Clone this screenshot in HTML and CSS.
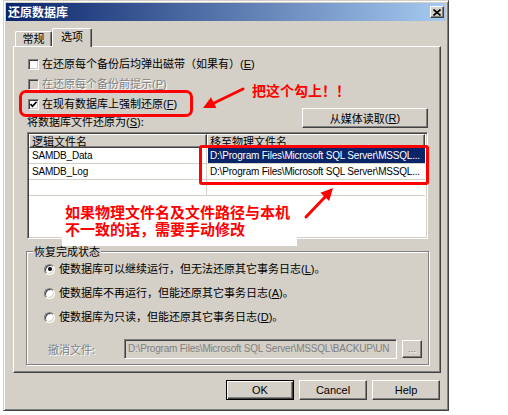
FILE: index.html
```html
<!DOCTYPE html>
<html lang="zh-CN">
<head>
<meta charset="utf-8">
<title>还原数据库</title>
<link rel="stylesheet" href="styles.css">
</head>
<body>
<div class="dialog">
  <div class="titlebar">
    <span class="title">还原数据库</span>
    <span class="close"><svg width="8" height="7" viewBox="0 0 8 7"><path d="M0.5 0.5 L7.5 6.5 M7.5 0.5 L0.5 6.5" stroke="#000" stroke-width="1.6" fill="none"/></svg></span>
  </div>
  <div class="content">
    <div class="tabs">
      <div class="tab">常规</div>
      <div class="tab active">选项</div>
    </div>
    <div class="panel">
      <div class="checks">
        <div class="chk"><span class="box"></span><span>在还原每个备份后均弹出磁带（如果有）<span class="acc">(<u>E</u>)</span></span></div>
        <div class="chk disabled"><span class="box"></span><span>在还原每个备份前提示<span class="acc">(<u>P</u>)</span></span></div>
        <div class="chk"><span class="box"><svg width="7" height="7" viewBox="0 0 7 7"><path d="M0.5 3 L2.5 5.2 L6.5 0.8" stroke="#000" stroke-width="1.6" fill="none"/></svg></span><span>在现有数据库上强制还原<span class="acc">(<u>F</u>)</span></span></div>
      </div>
      <div class="restore-row">
        <span class="restore-label">将数据库文件还原为<span class="acc">(<u>S</u>)</span>:</span>
        <span class="btn wide">从媒体读取<span class="acc">(<u>R</u>)</span></span>
      </div>
      <div class="listview">
        <div class="lv-head">
          <div class="hcell">逻辑文件名</div>
          <div class="hcell">移至物理文件名</div>
        </div>
        <div class="lv-row">
          <div class="cell">SAMDB_Data</div>
          <div class="cell"><span class="sel">D:\Program Files\Microsoft SQL Server\MSSQL...</span></div>
        </div>
        <div class="lv-row">
          <div class="cell">SAMDB_Log</div>
          <div class="cell"><span class="plain">D:\Program Files\Microsoft SQL Server\MSSQL...</span></div>
        </div>
        <div class="lv-row">
          <div class="cell"></div>
          <div class="cell"></div>
        </div>
      </div>
      <div class="group">
        <span class="group-label">恢复完成状态</span>
        <div class="radio-row"><span class="radio on"></span><span>使数据库可以继续运行，但无法还原其它事务日志<span class="acc">(<u>L</u>)</span>。</span></div>
        <div class="radio-row"><span class="radio"></span><span>使数据库不再运行，但能还原其它事务日志<span class="acc">(<u>A</u>)</span>。</span></div>
        <div class="radio-row"><span class="radio"></span><span>使数据库为只读，但能还原其它事务日志<span class="acc">(<u>D</u>)</span>。</span></div>
        <div class="undo-row">
          <span class="undo-label">撤消文件:</span>
          <span class="textbox">D:\Program Files\Microsoft SQL Server\MSSQL\BACKUP\UN</span>
          <span class="btn small">...</span>
        </div>
      </div>
    </div>
    <div class="buttons">
      <span class="btn default">OK</span>
      <span class="btn">Cancel</span>
      <span class="btn">Help</span>
    </div>
  </div>
</div>

<div class="mark mark-check"></div>
<div class="mark mark-files"></div>
<div class="note note-check">把这个勾上！！</div>
<div class="note-box">如果物理文件名及文件路径与本机<br>不一致的话，需要手动修改</div>
<svg class="arrows" width="508" height="415" viewBox="0 0 508 415">
  <line x1="243" y1="89" x2="212" y2="104" stroke="#f00" stroke-width="3" stroke-linecap="round"/>
  <polygon points="203,108 216.4,108 211,97.2" fill="#f00"/>
  <line x1="306" y1="217" x2="325" y2="197" stroke="#f00" stroke-width="3" stroke-linecap="round"/>
  <polygon points="333,188 329.2,200.9 320.4,192.7" fill="#f00"/>
</svg>
</body>
</html>
```

FILE: styles.css
```css
* { box-sizing: border-box; }

body {
  margin: 0;
  width: 508px;
  height: 415px;
  overflow: hidden;
  position: relative;
  background: #fff;
  font-family: "Noto Sans CJK SC", "Liberation Sans", sans-serif;
  font-size: 11px;
  line-height: 13px;
  color: #000;
}

.dialog {
  margin-left: 3px;
  width: 446px;
  height: 411px;
  background: #d4d0c8;
  border: 1px solid;
  border-color: #d4d0c8 #404040 #404040 #d4d0c8;
  box-shadow: inset 1px 1px 0 #fff, inset -1px -1px 0 #808080;
  padding: 2px;
}

.titlebar {
  height: 18px;
  display: flex;
  align-items: flex-start;
  padding-left: 2px;
  background: linear-gradient(to right, #0a246a, #a6caf0);
}

.title {
  color: #fff;
  font-weight: bold;
  font-size: 12px;
  line-height: 18px;
}

.close {
  margin-left: auto;
  margin-top: 3px;
  margin-right: 2px;
  width: 14px;
  height: 12px;
  display: flex;
  align-items: center;
  justify-content: center;
  background: #d4d0c8;
  border: 1px solid;
  border-color: #fff #404040 #404040 #fff;
  box-shadow: inset -1px -1px 0 #808080;
}

.content {
  padding: 7px 5px 0 7px;
}

.tabs {
  display: flex;
  align-items: flex-end;
  height: 18px;
  padding-left: 2px;
}

.tab {
  width: 37px;
  height: 15px;
  line-height: 13px;
  text-align: center;
  background: #d4d0c8;
  border: 1px solid;
  border-bottom: none;
  border-color: #fff #404040 #404040 #fff;
  border-radius: 2px 2px 0 0;
  box-shadow: inset -1px 0 0 #808080;
}

.tab.active {
  position: relative;
  z-index: 1;
  width: 40px;
  height: 19px;
  margin-bottom: -1px;
  padding-top: 1px;
}

.panel {
  height: 327px;
  border: 1px solid;
  border-color: #fff #404040 #404040 #fff;
  box-shadow: inset -1px -1px 0 #808080;
  padding: 7px 12px 0 13px;
}

.checks {
  display: flex;
  flex-direction: column;
}

.chk {
  height: 20px;
  display: flex;
  align-items: center;
  white-space: nowrap;
}

.box {
  width: 11px;
  height: 11px;
  margin-left: 1px;
  margin-right: 3px;
  display: flex;
  align-items: center;
  justify-content: center;
  background: #fff;
  border: 1px solid;
  border-color: #808080 #fff #fff #808080;
  box-shadow: inset 1px 1px 0 #404040, inset -1px -1px 0 #d4d0c8;
}

.chk.disabled {
  color: #808080;
  text-shadow: 1px 1px 0 #fff;
}

.chk.disabled .box {
  background: #d4d0c8;
}

.acc {
  font-family: "Liberation Sans", sans-serif;
}

.restore-row {
  margin-top: -6px;
  height: 20px;
  display: flex;
  justify-content: space-between;
  align-items: flex-end;
}

.restore-label {
  line-height: 12px;
}

.btn {
  height: 20px;
  width: 68px;
  display: flex;
  align-items: center;
  justify-content: center;
  background: #d4d0c8;
  border: 1px solid;
  border-color: #fff #404040 #404040 #fff;
  box-shadow: inset -1px -1px 0 #808080;
  font-family: "Liberation Sans", "Noto Sans CJK SC", sans-serif;
  font-size: 11px;
  white-space: nowrap;
}

.btn.wide {
  width: 126px;
  font-family: "Noto Sans CJK SC", sans-serif;
}

.btn.default {
  border-color: #000;
  box-shadow: inset 1px 1px 0 #fff, inset -1px -1px 0 #404040, inset -2px -2px 0 #808080;
}

.btn.small {
  width: 20px;
  height: 18px;
  margin-left: 5px;
  color: #808080;
  text-shadow: 1px 1px 0 #fff;
  font-size: 9px;
  line-height: 10px;
}

.listview {
  margin-top: 4px;
  height: 107px;
  background: #fff;
  border: 1px solid;
  border-color: #808080 #fff #fff #808080;
  box-shadow: inset 1px 1px 0 #404040, inset -1px -1px 0 #d4d0c8;
  padding: 1px 2px 2px 1px;
}

.lv-head,
.lv-row {
  display: grid;
  grid-template-columns: 178px 1fr;
}

.hcell {
  height: 14px;
  line-height: 12px;
  padding-left: 2px;
  background: #d4d0c8;
  border: 1px solid;
  border-color: #fff #404040 #404040 #fff;
  box-shadow: inset -1px -1px 0 #808080;
  white-space: nowrap;
  overflow: hidden;
}

.cell {
  height: 16px;
  border-bottom: 1px solid #d4d0c8;
  font-family: "Liberation Sans", sans-serif;
  font-size: 10px;
  letter-spacing: -0.2px;
  line-height: 15px;
  padding-left: 3px;
  white-space: nowrap;
  overflow: hidden;
}

.cell:first-child {
  border-right: 1px solid #d4d0c8;
}

.cell:last-child {
  padding-left: 0;
}

.sel,
.plain {
  display: block;
  height: 15px;
  padding-left: 2px;
  margin-left: 1px;
}

.sel {
  background: #0a246a;
  color: #fff;
}

.group {
  position: relative;
  margin: 12px -1px 0 -1px;
  height: 114px;
  border: 1px solid #808080;
  box-shadow: inset 1px 1px 0 #fff, 1px 1px 0 #fff;
  padding: 5px 0 0 17px;
}

.group-label {
  position: absolute;
  left: 6px;
  top: -7px;
  padding: 0 1px;
  background: #d4d0c8;
  line-height: 13px;
}

.radio-row {
  height: 24px;
  display: flex;
  align-items: center;
  white-space: nowrap;
}

.radio {
  width: 11px;
  height: 11px;
  margin-right: 4px;
  border-radius: 50%;
  background: #fff;
  border: 1px solid;
  border-color: #808080 #fff #fff #808080;
  box-shadow: inset 1px 1px 0 #404040, inset -1px -1px 0 #d4d0c8;
  display: flex;
  align-items: center;
  justify-content: center;
}

.radio.on::after {
  content: "";
  width: 4px;
  height: 4px;
  border-radius: 50%;
  background: #000;
}

.undo-row {
  margin-top: 10px;
  height: 20px;
  display: flex;
  align-items: center;
}

.undo-label {
  width: 76px;
  margin-left: 4px;
  color: #808080;
  text-shadow: 1px 1px 0 #fff;
}

.textbox {
  width: 273px;
  height: 20px;
  padding-left: 3px;
  background: #d4d0c8;
  border: 1px solid;
  border-color: #808080 #fff #fff #808080;
  box-shadow: inset 1px 1px 0 #404040, inset -1px -1px 0 #d4d0c8;
  color: #808080;
  font-family: "Liberation Sans", sans-serif;
  font-size: 10px;
  letter-spacing: -0.2px;
  line-height: 18px;
  white-space: nowrap;
  overflow: hidden;
}

.buttons {
  margin-top: 7px;
  display: flex;
  justify-content: flex-end;
  gap: 5px;
  padding-right: 1px;
}

/* annotations drawn over the screenshot */
.mark {
  position: absolute;
  border: 3px solid #f00;
}

.mark-check {
  left: 19px;
  top: 90px;
  width: 174px;
  height: 27px;
  border-radius: 7px;
}

.mark-files {
  left: 199px;
  top: 145px;
  width: 230px;
  height: 40px;
  border-radius: 3px;
}

.note {
  position: absolute;
  color: #f00;
  font-weight: bold;
  font-size: 14px;
  line-height: 16px;
  white-space: nowrap;
}

.note-check {
  left: 252px;
  top: 82px;
}

.note-box {
  position: absolute;
  left: 62px;
  top: 197px;
  width: 235px;
  height: 49px;
  background: #fff;
  padding: 6px 0 0 3px;
  color: #f00;
  font-weight: bold;
  font-size: 15px;
  line-height: 17px;
  white-space: nowrap;
}

.arrows {
  position: absolute;
  left: 0;
  top: 0;
  pointer-events: none;
}
```
